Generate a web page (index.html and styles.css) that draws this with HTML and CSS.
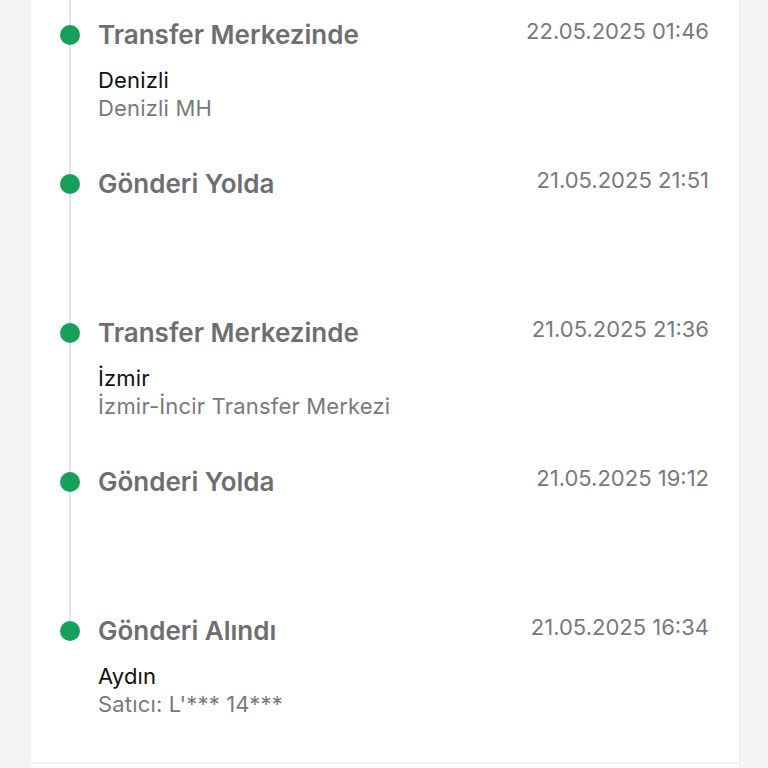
FILE: index.html
```html
<!DOCTYPE html>
<html lang="tr">
<head>
  <meta charset="UTF-8" />
  <meta name="viewport" content="width=device-width, initial-scale=1.0"/>
  <title>Gönderi Takibi</title>
  <link rel="stylesheet" href="styles.css">
</head>
<body>
  <div class="card">
    <!-- Tracking timeline -->
    <ul class="timeline">
      <li class="step">
        <span class="dot"></span>
        <div class="step-body">
          <h3 class="step-title">Transfer Merkezinde</h3>
          <p class="step-place">Denizli</p>
          <p class="step-note">Denizli MH</p>
        </div>
        <span class="step-date">22.05.2025 01:46</span>
      </li>
      <li class="step">
        <span class="dot"></span>
        <div class="step-body">
          <h3 class="step-title">Gönderi Yolda</h3>
        </div>
        <span class="step-date">21.05.2025 21:51</span>
      </li>
      <li class="step">
        <span class="dot"></span>
        <div class="step-body">
          <h3 class="step-title">Transfer Merkezinde</h3>
          <p class="step-place">İzmir</p>
          <p class="step-note">İzmir-İncir Transfer Merkezi</p>
        </div>
        <span class="step-date">21.05.2025 21:36</span>
      </li>
      <li class="step">
        <span class="dot"></span>
        <div class="step-body">
          <h3 class="step-title">Gönderi Yolda</h3>
        </div>
        <span class="step-date">21.05.2025 19:12</span>
      </li>
      <li class="step">
        <span class="dot"></span>
        <div class="step-body">
          <h3 class="step-title">Gönderi Alındı</h3>
          <p class="step-place">Aydın</p>
          <p class="step-note">Satıcı: L'*** 14***</p>
        </div>
        <span class="step-date">21.05.2025 16:34</span>
      </li>
    </ul>
    <div class="card-footer"></div>
  </div>
</body>
</html>
```

FILE: styles.css
```css
:root {
  --page-bg: #f3f4f6;
  --card-bg: #ffffff;
  --line: #e4e4e6;
  --dot: #16a05a;
  --title: #6e6e70;
  --muted: #79797b;
  --text: #111111;
}

body {
  margin: 0;
  background: var(--page-bg);
  font-family: Inter, "Noto Sans", sans-serif;
  overflow: hidden;
}

.card {
  margin-left: 31px;
  width: 709px;
  min-height: 768px;
  background: var(--card-bg);
  border-right: 1px solid #eceef1;
  box-sizing: border-box;
}

.timeline {
  list-style: none;
  margin: 0;
  padding: 0 30px 17px 29px;
}

.step {
  position: relative;
  display: grid;
  grid-template-columns: 20px 1fr auto;
  column-gap: 18px;
  height: 149px;
  padding-top: 20px;
  box-sizing: border-box;
}

/* connector line behind the dots */
.step::before {
  content: "";
  position: absolute;
  left: 9px;
  top: 0;
  bottom: 0;
  width: 2px;
  background: var(--line);
}

.step:last-child::before {
  bottom: auto;
  height: 35px;
}

.dot {
  position: relative;
  width: 20px;
  height: 20px;
  margin-top: 5px;
  border-radius: 50%;
  background: var(--dot);
}

.step-title {
  margin: 0;
  font-size: 26px;
  line-height: 30px;
  font-weight: 600;
  color: var(--title);
}

.step-place {
  margin: 16px 0 0;
  font-size: 22px;
  line-height: 28px;
  letter-spacing: 0.15px;
  color: var(--text);
}

.step-note {
  margin: 0;
  font-size: 22px;
  line-height: 28px;
  letter-spacing: 0.18px;
  color: var(--muted);
}

.step-date {
  font-size: 22px;
  line-height: 24px;
  color: var(--muted);
  margin-top: -1px;
}

.card-footer {
  border-top: 2px solid #f1f2f4;
  height: 40px;
}
```
